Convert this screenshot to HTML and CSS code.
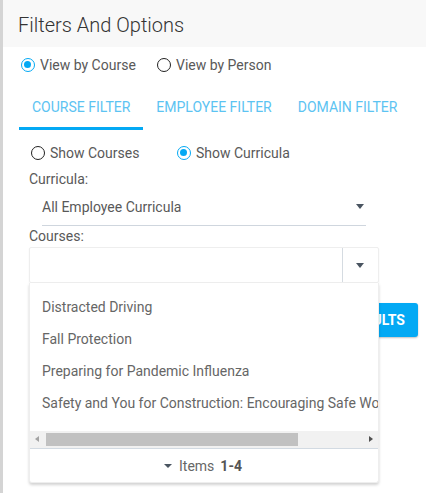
FILE: index.html
```html
<!DOCTYPE html>
<html>
<head>
<meta charset="utf-8">
<link rel="stylesheet" href="styles.css">
</head>
<body>
<div class="panel">
  <div class="header">Filters And Options</div>
  <div class="radio-row top-row">
    <label class="opt opt-wide"><span class="radio checked"></span>View by Course</label>
    <label class="opt"><span class="radio"></span>View by Person</label>
  </div>
  <div class="tabs">
    <div class="tab active">COURSE FILTER</div>
    <div class="tab">EMPLOYEE FILTER</div>
    <div class="tab">DOMAIN FILTER</div>
  </div>
  <div class="content">
    <div class="radio-row sub-row">
      <label class="opt opt-wider"><span class="radio"></span>Show Courses</label>
      <label class="opt"><span class="radio checked"></span>Show Curricula</label>
    </div>
    <div class="field-label">Curricula:</div>
    <div class="dropdown">
      <span>All Employee Curricula</span>
      <span class="caret"></span>
    </div>
    <div class="field-label courses-label">Courses:</div>
    <div class="combo-wrap">
      <div class="combo">
        <div class="combo-input"></div>
        <div class="combo-btn"><span class="caret"></span></div>
      </div>
      <div class="popup">
        <ul class="list">
          <li>Distracted Driving</li>
          <li>Fall Protection</li>
          <li>Preparing for Pandemic Influenza</li>
          <li>Safety and You for Construction: Encouraging Safe Work Practices</li>
        </ul>
        <div class="hscroll">
          <span class="arr arr-left"></span>
          <div class="track"><div class="thumb"></div></div>
          <span class="arr arr-right"></span>
        </div>
        <div class="footer"><span class="caret small"></span>Items <b>1-4</b></div>
      </div>
    </div>
    <div class="actions">
      <button class="btn">VIEW RESULTS</button>
    </div>
  </div>
</div>
</body>
</html>
```

FILE: styles.css
```css
* { box-sizing: border-box; }
html, body { margin: 0; padding: 0; background: #fff; }
body {
  font-family: Roboto, "Liberation Sans", sans-serif;
  font-size: 14px;
  color: #595959;
  width: 426px;
  height: 493px;
  overflow: hidden;
}
.panel {
  border-left: 3px solid #d4d4d4;
  height: 493px;
}
.header {
  height: 47px;
  background: #f8f8f8;
  padding-left: 15px;
  padding-top: 1px;
  line-height: 49px;
  font-size: 20px;
  font-weight: 300;
  color: #333;
}
.radio-row {
  display: flex;
  align-items: center;
}
.top-row {
  height: 36px;
  padding-left: 18px;
}
.opt {
  display: flex;
  align-items: center;
  gap: 5px;
}
.opt-wide { width: 136px; }
.opt-wider { width: 146px; }
.radio {
  width: 14px;
  height: 14px;
  border-radius: 50%;
  border: 1.5px solid #222;
  display: inline-block;
  position: relative;
  flex: none;
}
.radio.checked {
  border-color: #03a9f4;
}
.radio.checked::after {
  content: "";
  position: absolute;
  left: 2px;
  top: 2px;
  width: 7px;
  height: 7px;
  border-radius: 50%;
  background: #03a9f4;
}
.tabs {
  display: flex;
  padding-left: 16px;
  height: 47px;
}
.tab {
  padding: 4px 13px 0;
  line-height: 40px;
  color: #5cc3f2;
  font-size: 14px;
  border-bottom: 3px solid transparent;
}
.tab.active {
  border-bottom-color: #03a9f4;
}
.content {
  padding-left: 26px;
}
.sub-row {
  height: 46px;
  padding-left: 2px;
}
.field-label {
  height: 18px;
  line-height: 18px;
  margin-top: -6px;
}
.dropdown {
  margin-left: 13px;
  width: 324px;
  height: 38px;
  border-bottom: 1px solid #cfd6de;
  display: flex;
  align-items: center;
  justify-content: space-between;
  padding-right: 2px;
}
.caret {
  display: inline-block;
  width: 0;
  height: 0;
  border-left: 4.5px solid transparent;
  border-right: 4.5px solid transparent;
  border-top: 5px solid #4a5561;
}
.courses-label {
  margin-top: 1px;
}
.combo-wrap {
  position: relative;
  width: 350px;
  margin-top: 2px;
}
.combo {
  display: flex;
  height: 36px;
  border: 1px solid #eeeeee;
  border-radius: 2px;
  box-shadow: 0 1px 2px rgba(0,0,0,0.06);
}
.combo-input { flex: 1; }
.combo-btn {
  width: 36px;
  border-left: 1px solid #d5dbe1;
  display: flex;
  align-items: center;
  justify-content: center;
  padding-right: 1px;
}
.popup {
  position: absolute;
  top: 36px;
  left: 0;
  width: 350px;
  height: 200px;
  background: #fff;
  border: 1px solid #eee;
  border-top: none;
  border-radius: 0 0 3px 3px;
  box-shadow: 0 2px 3px rgba(0,0,0,0.18);
  z-index: 2;
  overflow: hidden;
}
.list {
  list-style: none;
  margin: 0;
  padding: 8px 0 0 12px;
  height: 148px;
  white-space: nowrap;
  overflow: hidden;
  color: #666;
}
.list li {
  height: 32px;
  line-height: 32px;
}
.hscroll {
  display: flex;
  align-items: center;
  height: 18px;
  background: #f1f1f1;
  border-bottom: 1px solid #d2dae2;
}
.arr {
  width: 16px;
  height: 17px;
  position: relative;
  flex: none;
}
.arr-left::after, .arr-right::after {
  content: "";
  position: absolute;
  top: 5px;
  width: 0;
  height: 0;
  border-top: 3.5px solid transparent;
  border-bottom: 3.5px solid transparent;
}
.arr-left::after { left: 5px; border-right: 4px solid #a3a3a3; }
.arr-right::after { left: 7px; border-left: 4px solid #505050; }
.track {
  flex: 1;
  height: 13px;
}
.thumb {
  width: 252px;
  height: 13px;
  background: #c1c1c1;
}
.footer {
  height: 33px;
  display: flex;
  align-items: center;
  justify-content: center;
  gap: 6px;
  color: #666;
  padding-right: 2px;
}
.footer b { color: #555; }
.caret.small {
  border-left-width: 4px;
  border-right-width: 4px;
  border-top-width: 4px;
  margin-right: 1px;
}
.actions {
  width: 389px;
  display: flex;
  justify-content: flex-end;
  margin-top: 20px;
}
.btn {
  background: #03a9f4;
  color: #fff;
  border: none;
  border-radius: 3px;
  height: 34px;
  padding: 0 13px;
  font-family: Roboto, "Liberation Sans", sans-serif;
  font-weight: 700;
  font-size: 14px;
  box-shadow: 0 1px 2px rgba(0,0,0,0.25);
}
```
